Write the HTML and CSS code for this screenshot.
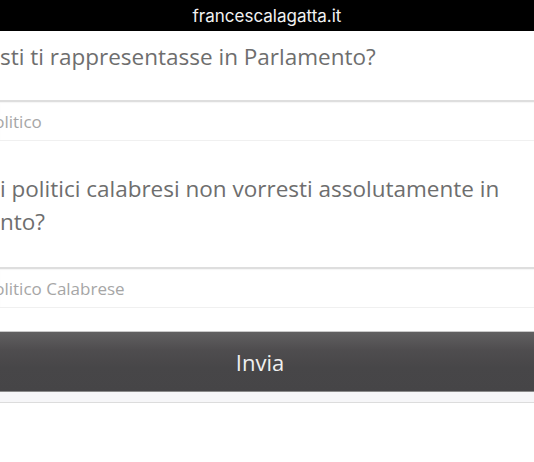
FILE: index.html
```html
<!DOCTYPE html>
<html lang="it">
<head>
  <meta charset="UTF-8" />
  <title>francescalagatta.it</title>
  <link rel="stylesheet" href="styles.css">
</head>
<body>

  <div class="topbar">francescalagatta.it</div>

  <form class="poll" onsubmit="return false">
    <p class="question q1">sti ti rappresentasse in Parlamento?</p>
    <input class="field" type="text" placeholder="Politico">

    <p class="question q2">i politici calabresi non vorresti assolutamente in<br>nto?</p>
    <input class="field" type="text" placeholder="Politico Calabrese">

    <button class="send" type="submit">Invia</button>
    <div class="under"></div>
  </form>

</body>
</html>
```

FILE: styles.css
```css
html, body {
  margin: 0;
  background: #fff;
  overflow: hidden;
}

body {
  font-family: 'Open Sans', 'Noto Sans', sans-serif;
}

.topbar {
  height: 31px;
  background: #000;
  color: #f2f2f2;
  font-family: Inter, Roboto, sans-serif;
  font-size: 17px;
  display: flex;
  align-items: center;
  justify-content: center;
}

.poll {
  display: flex;
  flex-direction: column;
}

.question {
  margin: 0;
  font-size: 22.5px;
  line-height: 33px;
  color: #6e6e6e;
}

.q1 {
  margin-top: 9px;
  margin-bottom: 27px;
}

.q2 {
  margin-top: 31px;
  margin-bottom: 29px;
}

.field {
  height: 41px;
  box-sizing: border-box;
  margin: 0;
  padding: 0;
  text-indent: -16px;
  border: none;
  border-top: 2px solid #dedede;
  border-bottom: 1px solid #f0f0f0;
  box-shadow: inset 0 1px 1px rgba(0, 0, 0, 0.04);
  font-family: inherit;
  font-size: 17px;
  color: #555;
  background: #fff;
  outline: none;
}

.field::placeholder {
  color: #a6a6a6;
}

.send {
  margin: 23px 0 0 -14px;
  width: calc(100% + 14px);
  height: 61px;
  border: none;
  border-top: 1px solid #c9c9c9;
  border-bottom: 1px solid #8a8a8a;
  background: linear-gradient(to bottom, #616061, #4f4d4f 30%, #474648 60%, #464547);
  color: #f0f0f0;
  font-family: inherit;
  font-size: 22px;
  cursor: pointer;
}

.under {
  height: 10px;
  background: #f6f6f8;
  border-bottom: 1px solid #dcdcdc;
}
```
